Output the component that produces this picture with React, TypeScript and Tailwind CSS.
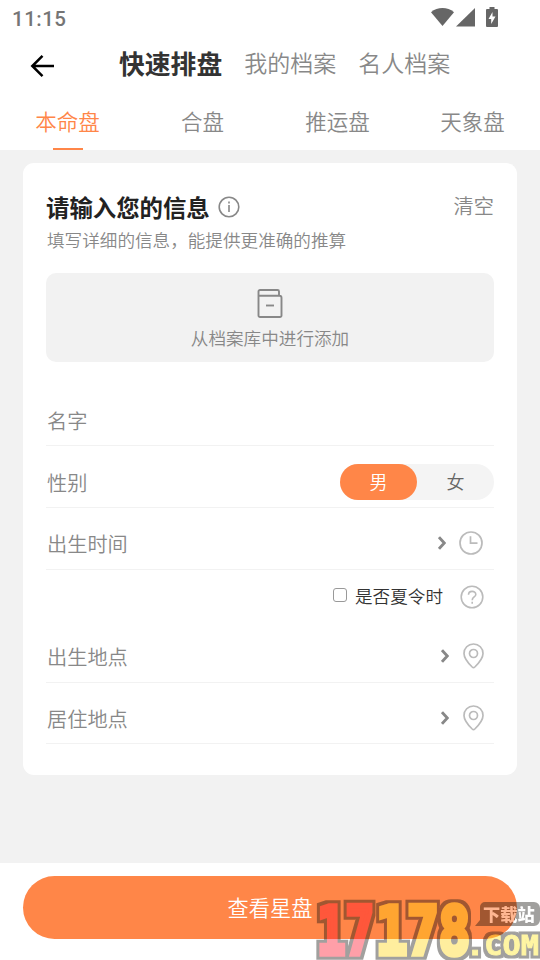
import { clsx } from 'clsx'

const pageTabs = ['快速排盘', '我的档案', '名人档案']
const chartTabs = ['本命盘', '合盘', '推运盘', '天象盘']

function StatusBar() {
  return (
    <div className="flex h-[38px] items-center justify-between pl-[12px] pr-[42px]">
      <span className="font-['Roboto',sans-serif] text-[20.500px] font-medium leading-none tracking-[0.500px] text-[#757575]">11:15</span>
      <svg className="-mt-[4px] h-[20px] w-[67px]" viewBox="0 0 67 20" fill="#666">
        <path d="M0 5.200C6.500-.4 16.500-.4 23 5.200L11.500 19Z" />
        <path d="M44 1V19.500H25Z" />
        <path d="M58.500 0h5v2h2.500a1 1 0 0 1 1 1v16a1 1 0 0 1-1 1H56a1 1 0 0 1-1-1V3a1 1 0 0 1 1-1h2.500Z" />
        <path d="M61.500 5l-4 7h2.700v5l4.300-7.500h-3V5Z" fill="#fff" />
      </svg>
    </div>
  )
}

function Chevron() {
  return (
    <svg className="h-[14px] w-[8px]" viewBox="0 0 8 14" fill="none" stroke="#888" strokeWidth="2.800">
      <path d="M1 1.200L6.300 7L1 12.800" />
    </svg>
  )
}

function PinIcon() {
  return (
    <svg className="h-[26px] w-[22px]" viewBox="0 0 22 26" fill="none" stroke="#bbb" strokeWidth="1.700">
      <path d="M10.500 1C5 1 1 5.200 1 10.400C1 15 5.200 20 9.200 24Q10.500 25.200 11.800 24C15.800 20 20 15 20 10.400C20 5.200 16 1 10.500 1Z" />
      <circle cx="10.500" cy="10.500" r="4" />
    </svg>
  )
}

function ClockIcon() {
  return (
    <svg className="h-[24px] w-[24px]" viewBox="0 0 24 24" fill="none" stroke="#bbb" strokeWidth="1.700">
      <circle cx="12" cy="12" r="11" />
      <path d="M11.500 5.200v7h7" />
    </svg>
  )
}

function HelpIcon() {
  return (
    <svg className="h-[24px] w-[24px]" viewBox="0 0 24 24" fill="none" stroke="#bbb" strokeWidth="1.600">
      <circle cx="12" cy="12" r="10.800" />
      <path d="M8.500 9.800C8.500 5.200 15.800 5.400 15.800 9.400C15.800 12 12.200 12 12.200 15.200" />
      <path d="M12.200 16.700v2" />
    </svg>
  )
}

function PlaceRow({ label, className }: { label: string; className: string }) {
  return (
    <div className={clsx('flex items-center justify-between border-b border-[#f2f2f2] pl-px pr-[9px]', className)}>
      <span>{label}</span>
      <div className="-mt-[3px] flex items-center gap-[14px]">
        <Chevron />
        <PinIcon />
      </div>
    </div>
  )
}

function SiteMark() {
  return (
    <svg className="pointer-events-none absolute bottom-0 right-0 h-[65px] w-[225px] opacity-40" viewBox="0 0 225 65">
      <defs>
        {/* square-cornered dark rim around the lettering */}
        <filter id="rim" x="-10%" y="-10%" width="120%" height="120%" colorInterpolationFilters="sRGB">
          <feMorphology in="SourceAlpha" operator="dilate" radius="3" result="wide" />
          <feFlood floodColor="#171310" />
          <feComposite in2="wide" operator="in" />
          <feMerge>
            <feMergeNode />
            <feMergeNode in="SourceGraphic" />
          </feMerge>
        </filter>
      </defs>
      <g fontFamily="DejaVu Sans Mono" fontWeight="700" fontSize="65" strokeWidth="5.500" filter="url(#rim)">
        <text x="2" y="58.500" textLength="57" lengthAdjust="spacingAndGlyphs" fill="#ff1228" stroke="#ff1228">17</text>
        <text x="61" y="58.500" textLength="94" lengthAdjust="spacingAndGlyphs" fill="#ffd50f" stroke="#ffd50f">178</text>
      </g>
      <path d="M170 7h49a6 6 0 0 1 6 6v12a6 6 0 0 1-6 6h-59l5-6V12a5 5 0 0 1 5-5Z" fill="#171310" />
      <text x="168" y="25.500" fontFamily="Noto Sans CJK SC" fontWeight="900" fontSize="17.200" fill="#fff">下载站</text>
      <text
        x="151"
        y="60"
        textLength="73"
        lengthAdjust="spacingAndGlyphs"
        fontFamily="DejaVu Sans Mono"
        fontWeight="700"
        fontSize="26"
        fill="#ffe81c"
        stroke="#ffe81c"
        strokeWidth="0.800"
        filter="url(#rim)"
      >
        .COM
      </text>
    </svg>
  )
}

export default function App() {
  return (
    <div className="relative flex h-[960px] w-[540px] flex-col overflow-hidden bg-[#f2f2f2] font-['Noto_Sans_CJK_SC',sans-serif] font-[350] text-[#888]">
      <header className="h-[150px] bg-white">
        <StatusBar />
        <nav className="flex h-[54px] items-center pl-[30px]">
          <svg className="mr-[65px] mt-px h-[24px] w-[24px]" viewBox="0 0 24 24" fill="none" stroke="#000" strokeWidth="2.500">
            <path d="M12.500 1.800L2.300 12L12.500 22.200M2.300 12H24" />
          </svg>
          <div className="-mt-[3px] flex items-center gap-[22px] text-[23px] leading-none">
            {pageTabs.map((tab, i) => (
              <span key={tab} className={clsx(i === 0 ? '-mt-[2px] text-[25.800px] font-bold text-[#333]' : '-mt-px')}>{tab}</span>
            ))}
          </div>
        </nav>
        <div className="grid h-[58px] grid-cols-4 text-center text-[21.500px] leading-[58px]">
          {chartTabs.map((tab, i) => (
            <div key={tab} className={clsx('flex flex-col items-center', i === 0 && 'text-[#ff8648]')}>
              <span className="h-[56px]">{tab}</span>
              {i === 0 && <span className="h-[2px] w-[30px] bg-[#ff8648]" />}
            </div>
          ))}
        </div>
      </header>

      <main className="mx-[23px] mt-[13px] h-[612px] rounded-[11px] bg-white px-[23px] pt-[31px] text-[20.200px] leading-none">
        <div className="flex h-[26px] items-center justify-between">
          <div className="flex items-center gap-[8px]">
            <h1 className="mt-[2px] text-[23.400px] font-bold text-[#222]">请输入您的信息</h1>
            <svg className="h-[22px] w-[22px]" viewBox="0 0 22 22" fill="none" stroke="#888" strokeWidth="1.600">
              <circle cx="11" cy="11" r="9.800" />
              <path d="M11 9v7M11 5.500v2" />
            </svg>
          </div>
          <span className="-mt-[2px]">清空</span>
        </div>
        <p className="mt-[11px] pl-px text-[17.600px] leading-[18px]">填写详细的信息，能提供更准确的推算</p>
        <button className="mt-[24px] flex h-[89px] w-full flex-col items-center rounded-[10px] bg-[#f2f2f2] pt-[16px] text-[17.600px] font-[350] leading-none">
          <svg className="h-[30px] w-[26px]" viewBox="0 0 26 30" fill="none" stroke="#888" strokeWidth="1.900">
            <path d="M2 6.800h20.500a2 2 0 0 1 2 2V26.500a1.500 1.500 0 0 1-1.500 1.500H3a1.500 1.500 0 0 1-1.500-1.500V2.500A1.500 1.500 0 0 1 3 1h17.500A1.500 1.500 0 0 1 22 2.500V6.500" />
            <path d="M9 16.500h8" />
          </svg>
          <span className="mt-[10px]">从档案库中进行添加</span>
        </button>

        <div className="mt-[34px] flex h-[50px] items-center border-b border-[#f2f2f2] pl-px pt-[2px]">名字</div>
        <div className="flex h-[62px] items-center justify-between border-b border-[#f2f2f2] pl-px pt-[10px]">
          <span className="pt-[3px]">性别</span>
          <div className="flex h-[36px] w-[154px] rounded-full bg-[#f4f4f4] text-center text-[18px] leading-[34px] text-[#666]">
            <span className="w-[77px] rounded-full bg-[#ff8648] text-white">男</span>
            <span className="w-[77px]">女</span>
          </div>
        </div>
        <div className="flex h-[62px] items-center justify-between border-b border-[#f2f2f2] pl-px pr-[11px] pt-[10px]">
          <span className="pt-[2px]">出生时间</span>
          <div className="-mt-[2px] flex items-center gap-[13px]">
            <Chevron />
            <ClockIcon />
          </div>
        </div>
        <label className="flex h-[55px] items-center justify-end pr-[10px] text-[17.600px] text-[#333]">
          <span className="-mt-[5px] mr-[8px] h-[14px] w-[14px] rounded-[3px] border-[1.500px] border-[#999]" />
          <span className="-mt-[4px] mr-[17px]">是否夏令时</span>
          <span className="-mt-[2px]">
            <HelpIcon />
          </span>
        </label>
        <PlaceRow label="出生地点" className="h-[58px] pt-[8px]" />
        <PlaceRow label="居住地点" className="h-[61px] pt-[12px]" />
      </main>

      <footer className="mt-auto h-[97px] bg-white px-[23px] pt-[13px]">
        <button className="h-[63px] w-full rounded-full bg-[#ff8648] pb-[2px] text-[21.200px] font-[350] text-white">查看星盘</button>
      </footer>
      <SiteMark />
    </div>
  )
}
